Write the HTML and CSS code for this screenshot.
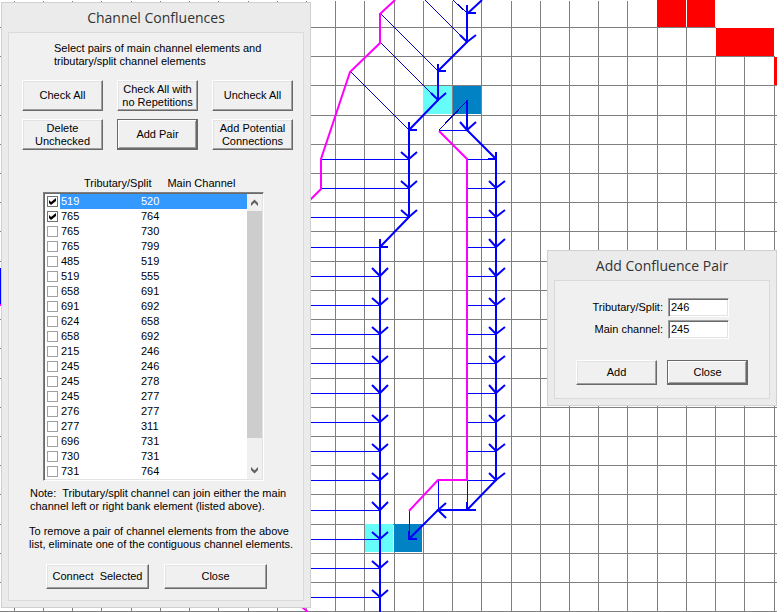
FILE: index.html
```
<!DOCTYPE html>
<html lang="en">
<head>
<meta charset="utf-8">
<title>Channel Confluences</title>
<link rel="stylesheet" href="styles.css">
</head>
<body>
<main class="workspace">
<svg class="map" width="777" height="612" viewBox="0 0 777 612" aria-hidden="true">
  <g class="grid" transform="translate(.5 .5)">
    <path d="M14 0V612M43 0V612M72 0V612M101 0V612M131 0V612M160 0V612M189 0V612M218 0V612M248 0V612M277 0V612M306 0V612M335 0V612M364 0V612M394 0V612M423 0V612M452 0V612M481 0V612M511 0V612M540 0V612M569 0V612M598 0V612M627 0V612M657 27V612M686 27V612M715 56V612M744 56V612M774 85V612"/>
    <path d="M-1 27H715M-1 56H774M-1 85H777M-1 115H777M-1 144H777M-1 173H777M-1 202H777M-1 231H777M-1 261H777M-1 290H777M-1 319H777M-1 348H777M-1 378H777M-1 407H777M-1 436H777M-1 465H777M-1 494H777M-1 524H777M-1 553H777M-1 582H777M-1 611H777"/>
  </g>
  <path fill="#f00" d="M657 0h29v27h-29zM687 0h28v27h-28zM716 28h58v28h-58zM774 57h3v28h-3z"/>
  <path fill="#66fcfa" d="M423 86h29v28h-29zM365 524h28v28h-28z"/>
  <path fill="#0082c4" d="M453 86h28v28h-28zM394 524h28v28h-28z"/>
  <path fill="#00f" d="M0 268h1v36h-1z"/>
  <path fill="#f0f" d="M0 304h1v2h-1z"/>
  <g class="link" transform="translate(.5 .5)">
    <path class="slant" d="M453 0L467 13M425 0L467 42M380 13L438 71M380 42L438 100M350 71L409 130M438 130L467 100"/>
    <path d="M438 130H467M321 159H409M321 188H409M310 217H409M310 247H380M310 276H380M310 305H380M310 334H380M310 363H380M310 393H380M310 422H380M310 451H380M310 480H380M310 510H380M310 539H380M310 568H380M310 597H380"/>
    <path d="M467 159H496M467 188H496M467 217H496M467 247H496M467 276H496M467 305H496M467 334H496M467 363H496M467 393H496M467 422H496M467 451H496M467 480H496M467 480V510M438 480V510M409 510V539"/>
  </g>
  <path class="bank" d="M395 0L380 14V43L350 72L321 159V189L310 200M439 131L467 159V480H438L409 511M302 607L308 612"/>
  <g class="channel">
    <path d="M482 0L467 14V42L438 71V100L409 130V217L380 247V612"/>
    <path d="M467 100V130L496 159V480L467 510H438L409 539"/>
    <path d="M467 5V13H476M438 64V71H446M409 122V130H417M380 239V247H388M467 502V510H476M409 531V539H417M488 159H496V152M446 503L438 510L446 518"/>
    <path d="M460 35L467 42L476 35M431 93L438 100L446 93M460 122L467 130L476 122"/>
    <path d="M401 152L409 159L417 152M401 181L409 188L417 181M401 210L409 217L417 210"/>
    <path d="M372 268L380 276L388 268M372 298L380 305L388 298M372 327L380 334L388 327M372 356L380 363L388 356M372 385L380 393L388 385M372 415L380 422L388 415M372 444L380 451L388 444M372 473L380 480L388 473M372 502L380 510L388 502M372 532L380 539L388 532M372 561L380 568L388 561M372 590L380 597L388 590"/>
    <path d="M489 181L496 188L505 181M489 210L496 217L505 210M489 239L496 247L505 239M489 268L496 276L505 268M489 298L496 305L505 298M489 327L496 334L505 327M489 356L496 363L505 356M489 385L496 393L505 385M489 415L496 422L505 415M489 444L496 451L505 444M489 473L496 480L505 473"/>
  </g>
</svg>

<section class="dialog dialog-confluences" aria-labelledby="t1">
  <h1 class="title" id="t1">Channel Confluences</h1>
  <div class="panel">
    <p class="intro">Select pairs of main channel elements and<br>tributary/split channel elements</p>
    <div class="actions">
      <button type="button">Check All</button>
      <button type="button">Check All with<br>no Repetitions</button>
      <button type="button">Uncheck All</button>
      <button type="button">Delete<br>Unchecked</button>
      <button type="button" class="default">Add Pair</button>
      <button type="button">Add Potential<br>Connections</button>
    </div>
    <div class="heads"><span id="h1">Tributary/Split</span><span id="h2">Main Channel</span></div>
    <div class="list">
      <table aria-labelledby="h1 h2">
        <tbody>
          <tr class="selected"><td><input type="checkbox" id="c1" checked></td><td><label for="c1">519</label></td><td>520</td></tr>
          <tr><td><input type="checkbox" id="c2" checked></td><td><label for="c2">765</label></td><td>764</td></tr>
          <tr><td><input type="checkbox" id="c3"></td><td><label for="c3">765</label></td><td>730</td></tr>
          <tr><td><input type="checkbox" id="c4"></td><td><label for="c4">765</label></td><td>799</td></tr>
          <tr><td><input type="checkbox" id="c5"></td><td><label for="c5">485</label></td><td>519</td></tr>
          <tr><td><input type="checkbox" id="c6"></td><td><label for="c6">519</label></td><td>555</td></tr>
          <tr><td><input type="checkbox" id="c7"></td><td><label for="c7">658</label></td><td>691</td></tr>
          <tr><td><input type="checkbox" id="c8"></td><td><label for="c8">691</label></td><td>692</td></tr>
          <tr><td><input type="checkbox" id="c9"></td><td><label for="c9">624</label></td><td>658</td></tr>
          <tr><td><input type="checkbox" id="c10"></td><td><label for="c10">658</label></td><td>692</td></tr>
          <tr><td><input type="checkbox" id="c11"></td><td><label for="c11">215</label></td><td>246</td></tr>
          <tr><td><input type="checkbox" id="c12"></td><td><label for="c12">245</label></td><td>246</td></tr>
          <tr><td><input type="checkbox" id="c13"></td><td><label for="c13">245</label></td><td>278</td></tr>
          <tr><td><input type="checkbox" id="c14"></td><td><label for="c14">245</label></td><td>277</td></tr>
          <tr><td><input type="checkbox" id="c15"></td><td><label for="c15">276</label></td><td>277</td></tr>
          <tr><td><input type="checkbox" id="c16"></td><td><label for="c16">277</label></td><td>311</td></tr>
          <tr><td><input type="checkbox" id="c17"></td><td><label for="c17">696</label></td><td>731</td></tr>
          <tr><td><input type="checkbox" id="c18"></td><td><label for="c18">730</label></td><td>731</td></tr>
          <tr><td><input type="checkbox" id="c19"></td><td><label for="c19">731</label></td><td>764</td></tr>
        </tbody>
      </table>
      <div class="scrollbar" aria-hidden="true">
        <svg width="15" height="17" viewBox="0 0 15 17"><path d="M4 12V9l3.500-3.500L11 9v3L7.500 8.500z"/></svg>
        <div class="thumb"></div>
        <svg width="15" height="17" viewBox="0 0 15 17"><path d="M4 5v3l3.500 3.500L11 8V5L7.500 8.500z"/></svg>
      </div>
    </div>
    <p class="note">Note:&nbsp; Tributary/split channel can join either the main<br>channel left or right bank element (listed above).</p>
    <p class="note">To remove a pair of channel elements from the above<br>list, eliminate one of the contiguous channel elements.</p>
    <div class="footer">
      <button type="button">Connect&nbsp; Selected</button>
      <button type="button">Close</button>
    </div>
  </div>
</section>

<section class="dialog dialog-pair" aria-labelledby="t2">
  <h2 class="title" id="t2">Add Confluence Pair</h2>
  <form class="panel">
    <div class="fields">
      <label for="trib">Tributary/Split:</label><input type="text" id="trib" value="246">
      <label for="main">Main channel:</label><input type="text" id="main" value="245">
    </div>
    <div class="pair-actions">
      <button type="button">Add</button>
      <button type="button" class="default">Close</button>
    </div>
  </form>
</section>
</main>
</body>
</html>
```

FILE: styles.css
```
* {
  box-sizing: border-box;
}

body {
  margin: 0;
  background: #fff;
  color: #000;
  font: 11px/13px "Liberation Sans", Arial, sans-serif;
}

.workspace {
  position: relative;
  min-height: 100vh;
  overflow: hidden;
}

/* Channel network map */
.map {
  display: block;
  shape-rendering: crispEdges;
}

.map g path,
.bank {
  fill: none;
}

.grid {
  stroke: #808080;
}

.link {
  stroke: #00f;
}

.slant {
  stroke: #0000c0;
}

.bank {
  stroke: #f0f;
  stroke-width: 2;
  shape-rendering: geometricPrecision;
}

.channel {
  stroke: #00f;
  stroke-width: 2;
  shape-rendering: geometricPrecision;
}

/* Dialog windows */
.dialog {
  position: absolute;
  padding: 0 6px 6px;
  border: 1px solid #d0d0d0;
  background: #ebebeb;
}

.dialog-confluences {
  left: 1px;
  top: 2px;
  width: 310px;
}

.dialog-pair {
  left: 547px;
  top: 250px;
  width: 230px;
}

.title {
  margin: 0;
  height: 29px;
  color: #333;
  font: 14px/30px "Open Sans", "Noto Sans", sans-serif;
  text-align: center;
}

.panel {
  border: 1px solid #dadada;
  background: #f0f0f0;
}

p {
  margin: 0;
}

/* Raised push buttons */
button {
  height: 25px;
  padding: 0;
  border: 1px solid;
  border-color: #fff #696969 #696969 #fff;
  border-radius: 0;
  background: #f0f0f0;
  box-shadow: inset -1px -1px #a0a0a0, inset 1px 1px #e3e3e3;
  color: #000;
  font: inherit;
}

button.default {
  border-color: #696969;
  box-shadow: inset -1px -1px #696969, inset 1px 1px #fff, inset -2px -2px #a0a0a0;
}

.intro {
  padding: 9px 0 0 45px;
}

.actions {
  display: grid;
  grid-template-columns: repeat(3, 81px);
  gap: 8px 14px;
  padding: 12px 0 0 13px;
}

.actions button {
  height: 31px;
}

.heads {
  display: flex;
  gap: 16px;
  padding: 27px 0 2px 75px;
}

.list {
  display: flex;
  width: 221px;
  margin-left: 34px;
  border: 1px solid;
  border-color: #808080 #fff #fff #808080;
  background: #fff;
  box-shadow: inset 1px 1px #696969, inset -1px -1px #e3e3e3;
  padding: 1px;
}

table {
  flex: 1;
  border-collapse: collapse;
  table-layout: fixed;
}

td {
  height: 15px;
  padding: 0 0 0 1px;
  line-height: 15px;
}

td:first-child {
  width: 15px;
}

td:nth-child(2) {
  width: 80px;
}

.selected td:not(:first-child) {
  background: #39f;
  color: #fff;
}

input[type="checkbox"] {
  appearance: none;
  display: block;
  width: 11px;
  height: 11px;
  margin: 0 1px;
  border: 1px solid #a0a0a0;
  background: #fff;
}

input[type="checkbox"]:checked {
  border-color: #707070;
}

input[type="checkbox"]:checked::before {
  content: "";
  display: block;
  width: 9px;
  height: 9px;
  background: #000;
  clip-path: polygon(1px 3px, 3px 5px, 8px 1px, 8px 4px, 3px 8px, 1px 6px);
}

.scrollbar {
  display: flex;
  flex-direction: column;
  width: 15px;
  background: #f0f0f0;
}

.scrollbar path {
  fill: #606060;
}

.thumb {
  flex: 0 0 227px;
  margin-bottom: auto;
  background: #cdcdcd;
}

.note {
  padding: 6px 0 0 21px;
}

.note + .note {
  padding: 12px 0 0 20px;
}

.footer {
  display: flex;
  gap: 15px;
  padding: 13px 0 11px 37px;
}

.footer button {
  width: 103px;
}

/* Add Confluence Pair form */
.fields {
  display: grid;
  grid-template-columns: 108px 61px;
  gap: 3px 5px;
  padding-top: 17px;
  line-height: 19px;
  text-align: right;
}

.fields input {
  width: 100%;
  height: 19px;
  padding: 0 2px;
  border: 1px solid;
  border-color: #a0a0a0 #fff #fff #a0a0a0;
  border-radius: 0;
  background: #fff;
  box-shadow: inset 1px 1px #696969, inset -1px -1px #e3e3e3;
  font: inherit;
}

.pair-actions {
  display: flex;
  gap: 10px;
  padding: 21px 0 13px 21px;
}

.pair-actions button {
  width: 81px;
}
```
